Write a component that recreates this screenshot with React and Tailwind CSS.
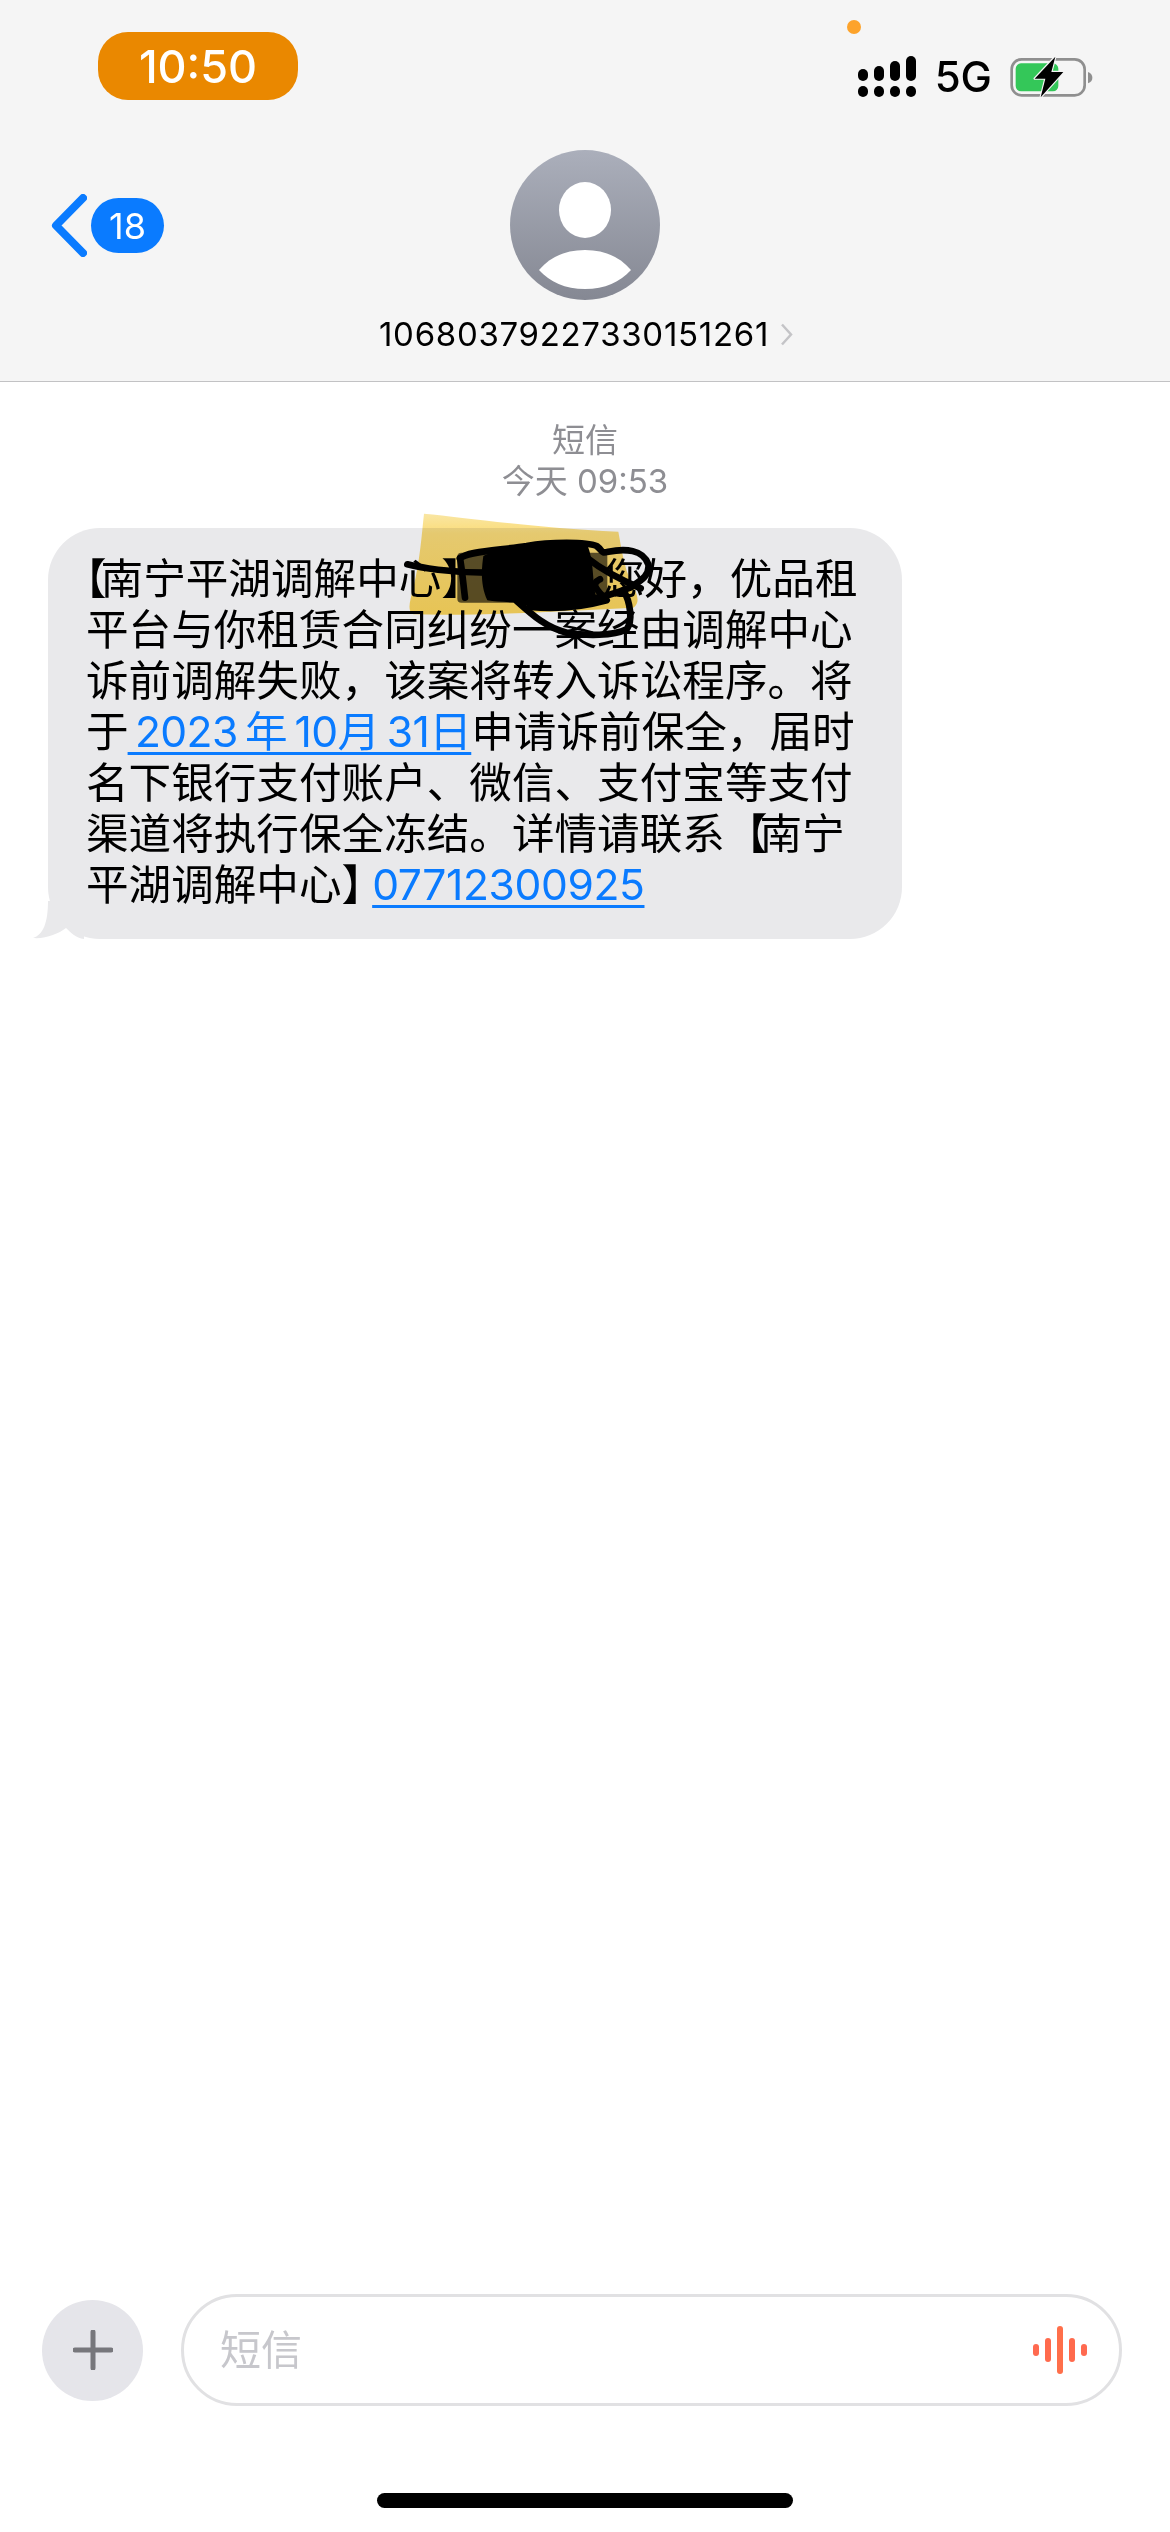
const cjk = "font-['Inter','Noto_Sans_CJK_SC',sans-serif]";

function SignalIcon() {
  return (
    <svg width="60" height="42" viewBox="0 0 60 42" className="block">
      <rect x="0" y="13" width="10" height="12" rx="5" />
      <rect x="16" y="10" width="10" height="15" rx="5" />
      <rect x="32" y="5" width="10" height="20" rx="5" />
      <rect x="48" y="0" width="10" height="25" rx="5" />
      <rect x="0" y="30" width="10" height="11" rx="5" />
      <rect x="16" y="30" width="10" height="11" rx="5" />
      <rect x="32" y="30" width="10" height="11" rx="5" />
      <rect x="48" y="30" width="10" height="11" rx="5" />
    </svg>
  );
}

function BatteryIcon() {
  return (
    <svg width="87" height="45" viewBox="530 135 261 135" className="block">
      <rect x="541" y="148" width="219" height="108" rx="30" fill="none" stroke="#8f8f8f" strokeWidth="8" />
      <rect x="553" y="160" width="128" height="84" rx="16" fill="#34c759" />
      <path d="M770 186 C780 190 783 196 783 203 C783 210 780 216 770 220 Z" fill="#8f8f8f" />
      <path d="M672 140 L610 206 L642 206 L628 262 L696 186 L660 186 Z" fill="#000" stroke="#f5f5f5" strokeWidth="7" strokeLinejoin="round" paintOrder="stroke" />
    </svg>
  );
}

function Avatar() {
  return (
    <div className="w-[150px] h-[150px] rounded-full bg-linear-to-b from-[#abafbb] to-[#858893] overflow-hidden">
      <svg width="150" height="150" viewBox="0 0 150 150" className="block">
        <ellipse cx="75" cy="60" rx="26" ry="28" fill="#fff" />
        <path d="M29 120 C40 107 55 100 75 100 C95 100 110 107 121 120 C110 132 95 139 75 139 C55 139 40 132 29 120 Z" fill="#fff" />
      </svg>
    </div>
  );
}

function Header() {
  return (
    <header className="relative bg-[#f5f5f5] h-[382px] border-b border-[#c2c2c4] font-['Inter',sans-serif]">
      <div className="absolute left-[847px] top-[20px] w-[14px] h-[14px] rounded-full bg-[#fda32b]"></div>
      <div className="flex justify-between pt-[32px] pl-[98px] pr-[75px] h-[100px]">
        <div className="w-[200px] h-[68px] rounded-[30px] bg-[#ea8800] flex items-center justify-center text-white text-[45px] font-medium leading-none">
          10:50
        </div>
        <div className="flex items-center pt-[22px] h-[68px]">
          <SignalIcon />
          <span className="text-black text-[42px] font-medium leading-none ml-[17px] mr-[16px]">5G</span>
          <BatteryIcon />
        </div>
      </div>
      <div className="grid grid-cols-[1fr_auto_1fr] mt-[50px]">
        <div className="flex items-start pl-[51px] pt-[44px] gap-[4px]">
          <svg width="36" height="63" viewBox="0 0 36 63" className="block">
            <path d="M32 4 L5 31.5 L32 59" fill="none" stroke="#0a7bff" strokeWidth="8" strokeLinecap="round" strokeLinejoin="round" />
          </svg>
          <div className="w-[73px] h-[55px] mt-[4px] rounded-full bg-[#0a7bff] text-white text-[36px] flex items-center justify-center leading-none">
            18
          </div>
        </div>
        <div className="flex flex-col items-center">
          <Avatar />
          <div className="flex items-center gap-[11px] mt-[14px] ml-[2px]">
            <span className="text-[33px] leading-[40px] text-black tracking-[0.7px]">10680379227330151261</span>
            <svg width="13" height="23" viewBox="0 0 13 23" className="block">
              <path d="M2 1.5 L11 11.5 L2 21.5" fill="none" stroke="#c4c4c7" strokeWidth="2.5" />
            </svg>
          </div>
        </div>
        <div></div>
      </div>
    </header>
  );
}

function Scribble() {
  return (
    <svg width="280" height="150" viewBox="0 0 840 450" className="absolute left-[352px] top-[-27px] pointer-events-none">
      <defs>
        <linearGradient id="marker" x1="0" y1="0" x2="0" y2="1">
          <stop offset="0" stopColor="#f9e6a4" />
          <stop offset="0.2" stopColor="#fbdc78" />
          <stop offset="1" stopColor="#fdd75c" />
        </linearGradient>
      </defs>
      <path d="M72 38 C200 50 400 80 655 92 C662 130 668 170 680 210 C700 260 730 300 700 320 C500 330 250 345 40 340 C20 330 30 300 40 260 C60 180 65 100 72 38 Z" fill="url(#marker)" style={{ mixBlendMode: 'multiply' }} />
      <rect x="172" y="155" width="450" height="150" rx="12" fill="#000" opacity="0.62" />
      <path d="M250 165 C300 140 420 125 560 128 C585 180 575 250 590 290 C500 305 340 310 262 298 C240 250 245 200 250 165 Z" fill="#000" />
      <g fill="none" stroke="#000" strokeWidth="20" strokeLinecap="round" strokeLinejoin="round">
        <path d="M22 190 C60 200 150 215 260 215" />
        <path d="M180 172 C200 150 300 148 380 135 C450 122 560 122 590 135 C610 150 600 158 625 152 C675 142 730 145 745 190 C750 225 720 240 690 260 C640 280 600 292 560 295 C500 300 400 320 370 300" />
        <path d="M350 300 C400 345 440 380 500 395 C560 405 640 405 680 385 C700 360 690 300 670 268" />
        <path d="M560 170 C610 210 670 240 722 262" />
        <path d="M180 172 C185 195 190 250 195 290" />
        <path d="M600 235 C570 250 590 265 620 298 C540 320 460 325 390 318" />
      </g>
    </svg>
  );
}

function Message() {
  const link = "text-[#0a7bff] underline decoration-[3px] underline-offset-[5px]";
  return (
    <div className={`relative w-[854px] h-[411px] ml-[48px] mt-[26px] rounded-[52px] bg-[#e9e9eb] pl-[38px] pt-[25px] text-[42.6px] leading-[51px] text-black whitespace-nowrap ${cjk}`}>
      <svg width="51" height="38" viewBox="33 900 51 38" className="absolute left-[-15px] bottom-[0px]">
        <path d="M33 937 C43 934 48 922 48 900 L84 900 L84 938 C76 937 70 931 66 927 C58 933 46 938 33 937 Z" fill="#e9e9eb" />
      </svg>
      <div className="relative">
        <div>
          <span className="-ml-[22px] tracking-[-6px]">【</span>南宁平湖调解中心<span>】</span>
          <span className="inline-block w-[118px]"></span>您好，优品租
        </div>
        <div>平台与你租赁合同纠纷一案经由调解中心</div>
        <div>诉前调解失败，该案将转入诉讼程序。将</div>
        <div>
          于<span className={`${link} ml-[-1px] tracking-[-0.6px] [word-spacing:-4px]`}> 2023 年 10月 31日</span>申请诉前保全，届时
        </div>
        <div>名下银行支付账户、微信、支付宝等支付</div>
        <div>
          渠道将执行保全冻结。详情请联系<span className="tracking-[-8px]">【</span>南宁
        </div>
        <div>
          平湖调解中心<span className="tracking-[-12px]">】</span><span className={`${link} tracking-[-0.4px]`}>07712300925</span>
        </div>
      </div>
      <Scribble />
    </div>
  );
}

function Composer() {
  const bars = [
    { h: 'h-[12px]', c: 'bg-[#ff6a50]' },
    { h: 'h-[24px]', c: 'bg-[#ff6a4c]' },
    { h: 'h-[48px]', c: 'bg-[#ff6f4a]' },
    { h: 'h-[24px]', c: 'bg-[#ff6a4c]' },
    { h: 'h-[12px]', c: 'bg-[#ff6a50]' },
  ];
  return (
    <div className="flex items-center pl-[42px] pr-[48px] h-[112px] gap-[38px]">
      <div className="w-[101px] h-[101px] rounded-full bg-[#e5e5ea] flex items-center justify-center shrink-0">
        <svg width="40" height="40" viewBox="0 0 40 40" className="block">
          <path d="M20 2 V38 M2 20 H38" stroke="#77777c" strokeWidth="5" strokeLinecap="round" />
        </svg>
      </div>
      <div className="flex-1 h-[112px] rounded-full border-[3px] border-[#e1e1e3] flex items-center justify-between pl-[36px] pr-[32px]">
        <span className={`text-[41px] leading-none text-[#c7c7cc] ${cjk}`}>短信</span>
        <div className="flex items-center gap-[6px]">
          {bars.map((bar, i) => (
            <div key={i} className={`w-[6px] rounded-full ${bar.h} ${bar.c}`}></div>
          ))}
        </div>
      </div>
    </div>
  );
}

export default function App() {
  return (
    <div className="w-[1170px] h-[2532px] bg-white flex flex-col overflow-hidden">
      <Header />
      <main className="flex-1">
        <div className={`text-center text-[#8e8e93] text-[33px] leading-[41px] mt-[38px] ${cjk}`}>
          <div>短信</div>
          <div>今天 09:53</div>
        </div>
        <Message />
      </main>
      <Composer />
      <div className="h-[126px] flex justify-center pt-[87px]">
        <div className="w-[416px] h-[15px] rounded-full bg-black"></div>
      </div>
    </div>
  );
}
